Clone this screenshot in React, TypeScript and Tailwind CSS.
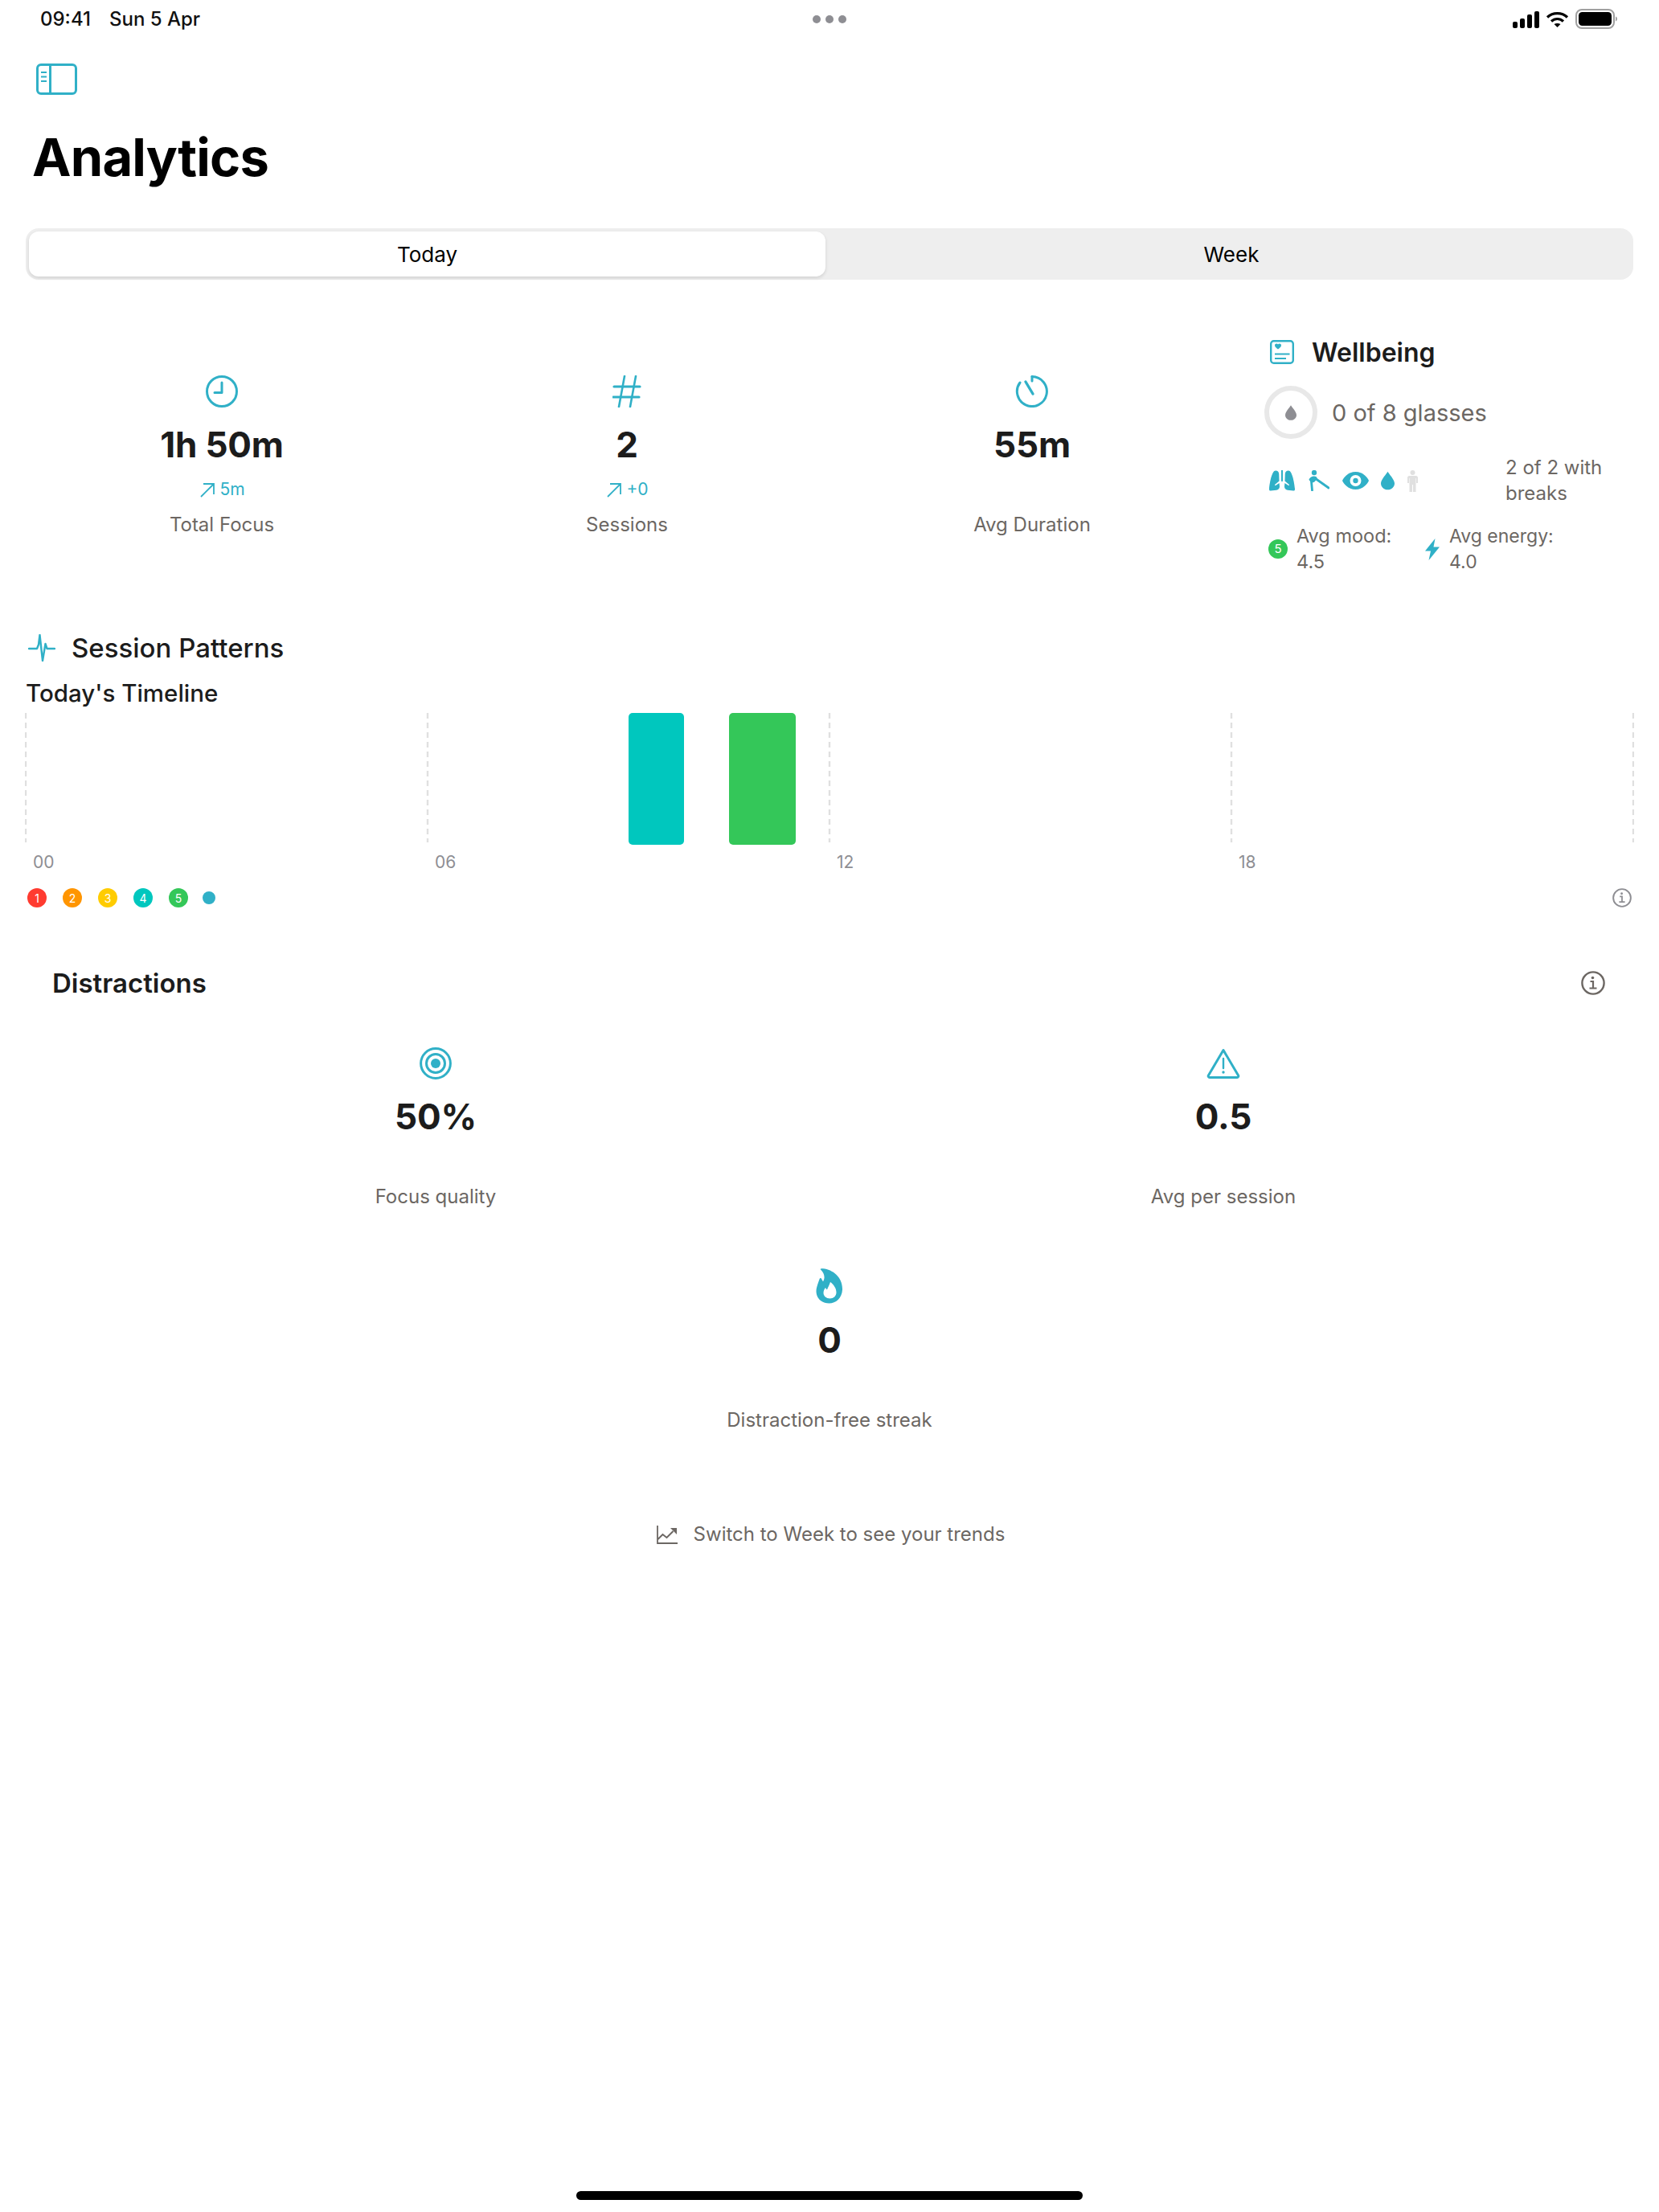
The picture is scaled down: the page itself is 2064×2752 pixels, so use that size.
import type { ReactNode } from "react"

const TEAL = "#30b0c7"
const LINES = [32, 532, 1032, 1532, 2032]

function SidebarIcon() {
  return (
    <svg width="51" height="39" viewBox="0 0 51 39" fill="none" stroke={TEAL} strokeWidth="3">
      <rect x="1.5" y="1.5" width="48" height="36" rx="4.5" />
      <path d="M17.5 1.5v36" />
      <path d="M6 11h7M6 16.5h7M6 22h7" strokeWidth="2" />
    </svg>
  )
}

function ClockIcon() {
  return (
    <svg width="42" height="40" viewBox="0 0 42 40" fill="none" stroke={TEAL} strokeWidth="3" strokeLinecap="round" strokeLinejoin="round">
      <circle cx="21" cy="20" r="18.5" />
      <path d="M21 9v12.5h-9" />
    </svg>
  )
}

function HashIcon() {
  return (
    <svg width="36" height="40" viewBox="0 0 36 40" fill="none" stroke={TEAL} strokeWidth="2.6" strokeLinecap="round">
      <path d="M15 1L8 39M29 1l-7 38" />
      <path d="M2 14h32M1 27h32" strokeWidth="3.2" />
    </svg>
  )
}

function TimerIcon() {
  return (
    <svg width="42" height="40" viewBox="0 0 42 40" fill="none" stroke={TEAL} strokeWidth="3" strokeLinecap="round">
      <path d="M21 1.5a18.5 18.5 0 1 1-15 7.500" />
      <path d="M21 1.5V7" />
      <path d="M13 8l9 15" strokeWidth="3.4" />
    </svg>
  )
}

function TargetIcon() {
  return (
    <svg width="40" height="40" viewBox="0 0 40 40" fill="none" stroke={TEAL} strokeWidth="3">
      <circle cx="20" cy="20" r="18.4" />
      <circle cx="20" cy="20" r="11.5" />
      <circle cx="20" cy="20" r="6" fill={TEAL} stroke="none" />
    </svg>
  )
}

function WarningIcon() {
  return (
    <svg width="42" height="40" viewBox="0 0 42 40" fill="none" stroke={TEAL} strokeWidth="3" strokeLinecap="round" strokeLinejoin="round">
      <path d="M21 3.5L39.6 35a1.6 1.6 0 0 1-1.4 2.4H3.8A1.6 1.6 0 0 1 2.4 35z" />
      <path d="M21 14v12" strokeWidth="2.4" />
      <circle cx="21" cy="31" r="1.7" fill={TEAL} stroke="none" />
    </svg>
  )
}

function FlameIcon() {
  return (
    <svg width="34" height="44" viewBox="0 0 34 44">
      <path
        fill={TEAL}
        d="M6 1.5C5 .6 6.500 0 9 .3 21 1.500 33.500 11 33 26.500 32.500 37 25 43.500 16.500 43.500 7.500 43.500.5 37.500.5 28.500.5 23.500 3 18 4.500 13.500 5 12 6.500 11.500 7 13l2 3.500C12 11.500 10.500 6 6 1.500z"
      />
      <path
        fill="#fff"
        d="M18 17c4.500 3.500 7.500 8 7.500 13 0 4.500-3.500 7.500-8 7.500S9.500 34.500 9.500 30.500c0-2.500 1-4.500 2.500-6.500.5 1 1 2 2 2.500C15 23.500 17 20.500 18 17z"
      />
    </svg>
  )
}

function TrendIcon() {
  return (
    <svg width="26" height="23" viewBox="0 0 26 23" fill="none" stroke="#6c6763" strokeWidth="1.8">
      <path d="M1 0v22h25" />
      <path d="M1.500 17l6-6 5 4 8-8" strokeWidth="2" />
      <path d="M17 3h8v8z" fill="#6c6763" stroke="none" />
    </svg>
  )
}

function InfoIcon({ size, color }: { size: number; color: string }) {
  return (
    <svg width={size} height={size} viewBox="0 0 30 30" fill="none" stroke={color} strokeWidth="2.4">
      <circle cx="15" cy="15" r="13.6" />
      <circle cx="14.500" cy="8.500" r="1.800" fill={color} stroke="none" />
      <path d="M11.500 13h3.500v8.500M10.500 21.500h9" strokeWidth="2.2" />
    </svg>
  )
}

function HeartNoteIcon() {
  return (
    <svg width="30" height="30" viewBox="0 0 30 30" fill="none" stroke={TEAL} strokeWidth="2.4">
      <rect x="1.200" y="1.200" width="27.600" height="27.600" rx="3.500" />
      <path
        d="M10 11.500C7.500 9.500 6 8.300 6 6.700 6 5.400 7 4.500 8.200 4.500c.8 0 1.400.4 1.800 1 .4-.6 1-1 1.800-1C13 4.500 14 5.400 14 6.700c0 1.600-1.500 2.800-4 4.800z"
        fill={TEAL}
        stroke="none"
      />
      <path d="M6 17.500h18.500M6 23h14" strokeWidth="2" />
    </svg>
  )
}

function DropIcon({ width, height, color }: { width: number; height: number; color: string }) {
  return (
    <svg width={width} height={height} viewBox="0 0 18 24">
      <path fill={color} d="M9 0c1.500 3 9 10.500 9 15.500C18 20.500 14 24 9 24s-9-3.500-9-8.500C0 10.500 7.500 3 9 0z" />
    </svg>
  )
}

function LungsIcon() {
  return (
    <svg width="32" height="26" viewBox="0 0 32 26">
      <path fill={TEAL} d="M8 .5c2.500 0 4 1.500 4.200 4l.3 9L7 18l.6 1.300 5-3.400.4 4c.2 3-1.500 4.600-4 4.900L2 25.500C.5 25.700-.2 24.500 0 23 .8 14.500 3.500 .5 8 .5z" />
      <path fill={TEAL} d="M24 .5c-2.500 0-4 1.500-4.200 4l-.3 9 5.500 4.500-.6 1.300-5-3.400-.4 4c-.2 3 1.500 4.600 4 4.900l7 .7c1.500.2 2.200-1 2-2.500C31.200 14.500 28.500 .5 24 .5z" />
      <path d="M15 0h2v13.500l-1 .8-1-.8z" fill={TEAL} />
    </svg>
  )
}

function StretchIcon() {
  return (
    <svg width="27" height="26" viewBox="0 0 27 26" fill="none" stroke={TEAL} strokeLinecap="round">
      <circle cx="8" cy="3" r="3.200" fill={TEAL} stroke="none" />
      <path d="M8 7.500c-3 0-6 2-6.500 4.500l3 3.500c2 .5 4.500-1 5.500-3l2-2-1.500-2.500z" fill={TEAL} stroke="none" />
      <path d="M9 10l5 3.500 12 8.500" strokeWidth="2.800" />
      <path d="M4.500 14l1 11" strokeWidth="2.800" />
    </svg>
  )
}

function EyeIcon() {
  return (
    <svg width="33" height="22" viewBox="0 0 33 22">
      <path fill={TEAL} d="M16.500 0C26 0 31.500 7.500 33 11c-1.500 3.500-7 11-16.500 11S1.500 14.500 0 11C1.500 7.500 7 0 16.500 0z" />
      <circle cx="16.500" cy="11" r="7" fill="#fff" />
      <circle cx="16.500" cy="11" r="3.200" fill={TEAL} />
    </svg>
  )
}

function PersonIcon() {
  return (
    <svg width="13" height="27" viewBox="0 0 13 27" fill="#e0e0e0">
      <circle cx="6.500" cy="3" r="3" />
      <path d="M2 7h9c1 0 2 1 2 2v7h-2v-6h-.5v17H7V18H6v9H2.500V10H2v6H0V9c0-1 1-2 2-2z" />
    </svg>
  )
}

function BoltIcon() {
  return (
    <svg width="18" height="27" viewBox="0 0 18 27">
      <path fill={TEAL} d="M12.500 0L0 15.500h7L4.500 27 18 10.500h-7.500z" />
    </svg>
  )
}

function PulseIcon() {
  return (
    <svg width="34" height="34" viewBox="0 0 34 34" fill="none" stroke={TEAL} strokeWidth="2.400" strokeLinejoin="round" strokeLinecap="round">
      <path d="M1 18h10l2-5 1.500-12 3.500 32 3.500-21 2 6h9.500" />
    </svg>
  )
}

function StatusIcons() {
  return (
    <div className="flex items-center">
      <svg width="34" height="22" viewBox="0 0 34 22" fill="#000">
        <rect x="0" y="14" width="6" height="8" rx="2" />
        <rect x="9" y="10" width="6" height="12" rx="2" />
        <rect x="18" y="5" width="6" height="17" rx="2" />
        <rect x="27" y="1" width="6" height="21" rx="2" />
      </svg>
      <svg className="ml-[7px]" width="29" height="22" viewBox="0 0 29 22" fill="none" stroke="#000" strokeWidth="3.200">
        <path d="M2 8.500c7-6.500 18-6.500 25 0" />
        <path d="M7 13.500c4.500-4 10.500-4 15 0" />
        <path d="M14.500 21l-4-4c2.500-1.500 5.500-1.500 8 0z" fill="#000" stroke="none" />
      </svg>
      <svg className="ml-[8px]" width="52" height="26" viewBox="0 0 52 26">
        <rect x="1" y="1" width="47" height="23" rx="7" fill="none" stroke="#a0a0a0" strokeWidth="2" />
        <rect x="4" y="4" width="41" height="17" rx="4.500" fill="#000" />
        <path d="M50 9.500c1.500.5 2 1.800 2 3s-.5 2.500-2 3z" fill="#a0a0a0" />
      </svg>
    </div>
  )
}

function Stat(props: { icon: ReactNode; value: string; delta?: string; label: string; iconHeight?: string }) {
  const { icon, value, delta, label, iconHeight = "h-10" } = props
  return (
    <div className="flex flex-col items-center">
      <div className={`flex items-center justify-center ${iconHeight}`}>{icon}</div>
      <div className="mt-5 text-[44px] leading-[52px] font-bold tracking-[-0.2px] text-[#1c1c1c]">{value}</div>
      <div className="mt-4 flex h-7 items-center gap-[5px] text-[21px] text-[#30b0c7]">
        {delta && (
          <>
            <svg width="21" height="21" viewBox="0 0 21 21" fill="none" stroke={TEAL} strokeWidth="1.800">
              <path d="M3 19L18 4M6 3h13v13" />
            </svg>
            {delta}
          </>
        )}
      </div>
      <div className="mt-[15px] text-[24px] leading-[30px] text-[#6c6763]">{label}</div>
    </div>
  )
}

function Wellbeing() {
  return (
    <div className="pl-[29px]">
      <div className="flex h-9 items-center gap-[22px] pl-[7px]">
        <HeartNoteIcon />
        <span className="pt-[2px] text-[32px] font-semibold text-[#1c1c1c]">Wellbeing</span>
      </div>
      <div className="mt-6 flex items-center gap-[18px]">
        <div className="flex h-[66px] w-[66px] items-center justify-center rounded-full border-[6px] border-[#e8e8e8]">
          <DropIcon width={14} height={21} color="#8e8e93" />
        </div>
        <span className="pt-[2px] text-[29px] text-[#6c6763]">0 of 8 glasses</span>
      </div>
      <div className="mt-5 flex h-16 items-center pl-[6px]">
        <div className="flex w-[294px] items-center">
          <LungsIcon />
          <div className="ml-4"><StretchIcon /></div>
          <div className="ml-4"><EyeIcon /></div>
          <div className="ml-[15px]"><DropIcon width={17} height={24} color={TEAL} /></div>
          <div className="ml-4"><PersonIcon /></div>
        </div>
        <span className="w-[140px] text-[24px] leading-8 text-[#6c6763]">2 of 2 with breaks</span>
      </div>
      <div className="mt-[21px] flex items-center pl-[5px]">
        <div className="flex h-6 w-6 items-center justify-center rounded-full bg-[#34c759] text-[15px] text-white">5</div>
        <span className="ml-[11px] w-[160px] text-[23.5px] leading-8 text-[#6c6763]">Avg mood: 4.5</span>
        <BoltIcon />
        <span className="ml-3 w-[150px] text-[23px] leading-8 text-[#6c6763]">Avg energy: 4.0</span>
      </div>
    </div>
  )
}

function Timeline() {
  return (
    <>
      <svg className="-ml-px mt-[5px] block h-[164px] w-[2002px]" viewBox="31 0 2002 164">
        {LINES.map((x) => (
          <line key={x} x1={x} x2={x} y1="0" y2="161" stroke="#e0e0e0" strokeWidth="2.4" strokeDasharray="7 5" />
        ))}
        <rect x="782" y="0" width="69" height="164" rx="5" fill="#00c7be" />
        <rect x="907" y="0" width="83" height="164" rx="5" fill="#34c759" />
      </svg>
      <div className="mt-[8px] h-[27px] grid grid-cols-4 text-[21px] leading-7 text-[#8e8e93]">
        {["00", "06", "12", "18"].map((h) => (
          <span key={h} className="pl-[9px]">{h}</span>
        ))}
      </div>
    </>
  )
}

const legend = [
  { n: "1", color: "bg-[#ff3b30]" },
  { n: "2", color: "bg-[#ff9500]" },
  { n: "3", color: "bg-[#ffcc00]" },
  { n: "4", color: "bg-[#00c7be]" },
  { n: "5", color: "bg-[#34c759]" },
]

export default function App() {
  return (
    <div className="flex h-[2752px] w-[2064px] flex-col overflow-hidden bg-white font-['Inter',sans-serif] text-black">
      <div className="relative flex h-12 items-center justify-between pr-[52px] pl-[50px]">
        <div className="flex gap-[23px] text-[24px] font-medium text-[#111]">
          <span>09:41</span>
          <span>Sun 5 Apr</span>
        </div>
        <div className="absolute top-[19px] left-[1011px] flex gap-[6px]">
          <span className="h-[10px] w-[10px] rounded-full bg-[#8e8e93]" />
          <span className="h-[10px] w-[10px] rounded-full bg-[#8e8e93]" />
          <span className="h-[10px] w-[10px] rounded-full bg-[#8e8e93]" />
        </div>
        <StatusIcons />
      </div>

      <div className="px-8">
        <div className="mt-[31px] h-[39px] pl-[13px]">
          <SidebarIcon />
        </div>
        <h1 className="mt-[38px] pl-2 text-[65px] leading-[80px] font-bold tracking-[-0.8px]">Analytics</h1>

        <div className="mt-12 grid h-16 grid-cols-2 rounded-2xl bg-[#eeeeee] text-[26px]">
          <div className="my-1 mr-[5px] ml-1 flex items-center justify-center rounded-[12px] bg-white shadow-[0_2px_4px_rgba(0,0,0,0.12)]">Today</div>
          <div className="flex items-center justify-center">Week</div>
        </div>

        <div className="mt-[72px] grid grid-cols-4 gap-4">
          <div className="pt-[47px]">
            <Stat icon={<ClockIcon />} value="1h 50m" delta="5m" label="Total Focus" />
          </div>
          <div className="pt-[47px]">
            <Stat icon={<HashIcon />} value="2" delta="+0" label="Sessions" />
          </div>
          <div className="pt-[47px]">
            <Stat icon={<TimerIcon />} value="55m" label="Avg Duration" />
          </div>
          <Wellbeing />
        </div>

        <div className="mt-[71px] flex h-10 items-center gap-5 pl-[3px]">
          <PulseIcon />
          <span className="pt-[2px] text-[33px] font-medium text-[#1c1c1c]">Session Patterns</span>
        </div>
        <div className="mt-4 text-[29.5px] leading-10 font-medium text-[#1c1c1c]">Today's Timeline</div>
        <Timeline />

        <div className="mt-[19px] flex h-6 items-center pr-[2px] pl-[2px]">
          <div className="flex items-center gap-5">
            {legend.map((d) => (
              <div key={d.n} className={`flex h-6 w-6 items-center justify-center rounded-full text-[14px] text-white ${d.color}`}>{d.n}</div>
            ))}
          </div>
          <div className="ml-[18px] h-4 w-4 rounded-full bg-[#30b0c7]" />
          <div className="ml-auto">
            <InfoIcon size={24} color="#8e8e93" />
          </div>
        </div>

        <div className="mt-[72px] flex h-11 items-center justify-between pr-[35px] pl-[33px]">
          <span className="pt-[2px] text-[33px] font-semibold text-[#1c1c1c]">Distractions</span>
          <InfoIcon size={30} color="#6c6763" />
        </div>

        <div className="mx-8 mt-[58px] grid grid-cols-2 gap-6">
          <Stat icon={<TargetIcon />} value="50%" label="Focus quality" />
          <Stat icon={<WarningIcon />} value="0.5" label="Avg per session" />
        </div>
        <div className="mt-[74px]">
          <Stat icon={<FlameIcon />} iconHeight="h-[43px]" value="0" label="Distraction-free streak" />
        </div>

        <div className="mt-[111px] flex h-8 items-center justify-center gap-5 pl-[3px] text-[24px] text-[#6c6763]">
          <TrendIcon />
          <span>Switch to Week to see your trends</span>
        </div>
      </div>

      <div className="mt-auto mb-[15px] ml-[717px] h-[11px] w-[630px] rounded-full bg-black" />
    </div>
  )
}
